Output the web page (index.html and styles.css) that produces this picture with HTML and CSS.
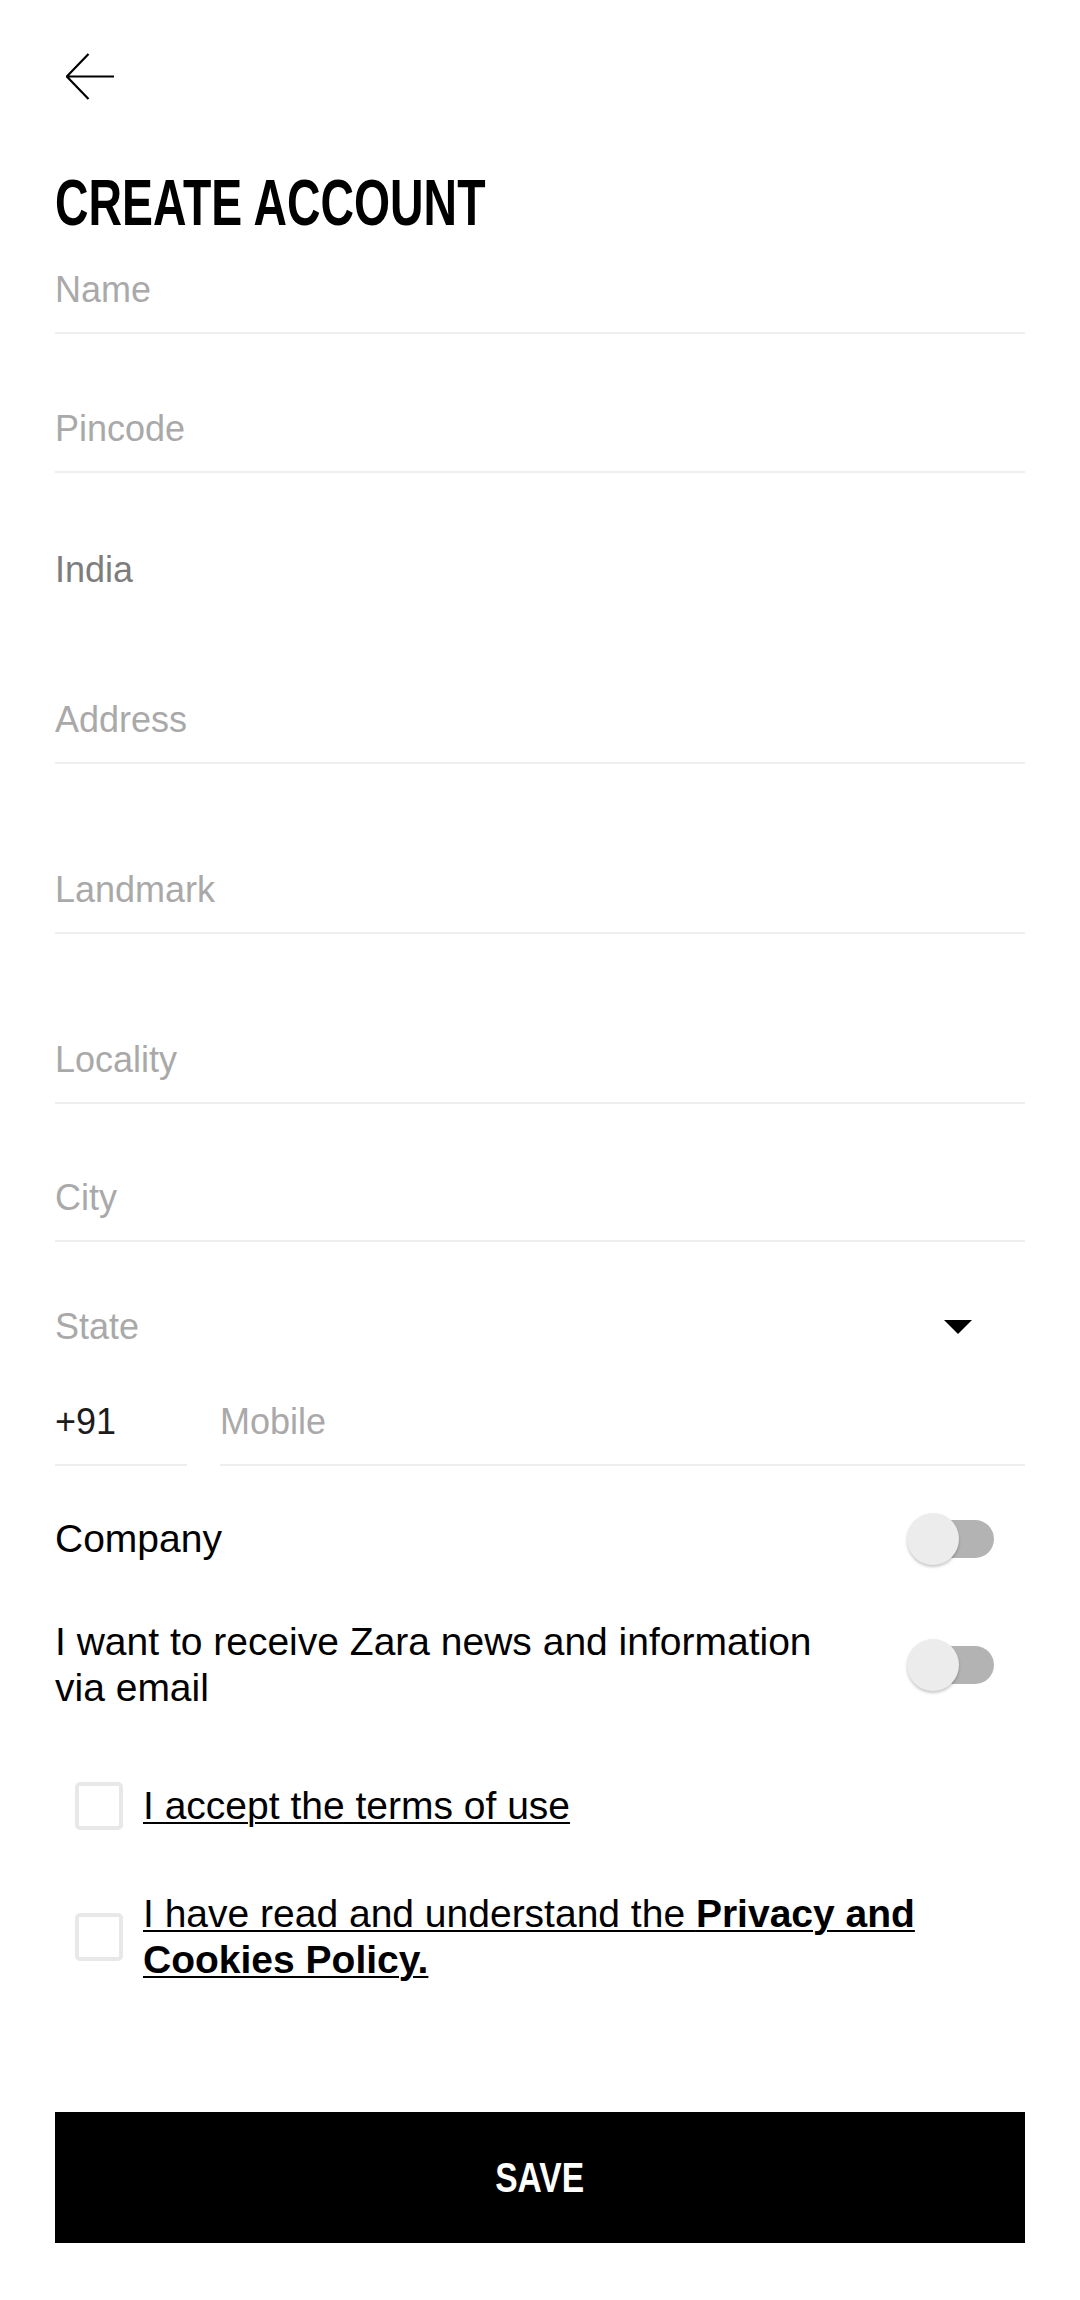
FILE: index.html
```html
<!DOCTYPE html>
<html lang="en">
<head>
<meta charset="utf-8">
<title>Create account</title>
<link rel="stylesheet" href="styles.css">
</head>
<body>
<div class="page">
  <header class="header">
    <svg class="back" width="50" height="48" viewBox="0 0 50 48" aria-label="Back">
      <path d="M48 24.5H1.5M22.5 2L0.8 24.5L22.5 47" fill="none" stroke="#000" stroke-width="2.2"/>
    </svg>
    <h1 class="title">CREATE ACCOUNT</h1>
  </header>

  <form class="form">
    <div class="field f-name"><span class="ph">Name</span></div>
    <div class="field f-pin"><span class="ph">Pincode</span></div>
    <div class="field plain f-country"><span class="value-grey">India</span></div>
    <div class="field f-address"><span class="ph">Address</span></div>
    <div class="field f-landmark"><span class="ph">Landmark</span></div>
    <div class="field f-locality"><span class="ph">Locality</span></div>
    <div class="field f-city"><span class="ph">City</span></div>
    <div class="field plain select f-state">
      <span class="ph">State</span>
      <svg class="caret" width="28" height="14" viewBox="0 0 28 14"><path d="M0 0H28L14 14Z" fill="#000"/></svg>
    </div>
    <div class="phone">
      <div class="field prefix"><span class="value-dark">+91</span></div>
      <div class="field mobile"><span class="ph">Mobile</span></div>
    </div>

    <div class="toggle-row t-company">
      <span class="toggle-label">Company</span>
      <span class="switch"></span>
    </div>
    <div class="toggle-row t-news">
      <span class="toggle-label">I want to receive Zara news and information via email</span>
      <span class="switch"></span>
    </div>

    <div class="check-row c-terms">
      <span class="box"></span>
      <span class="check-label"><span class="link">I accept the terms of use</span></span>
    </div>
    <div class="check-row c-privacy">
      <span class="box"></span>
      <span class="check-label"><span class="link">I have read and understand the <b>Privacy and Cookies Policy.</b></span></span>
    </div>

    <button type="button" class="save"><span class="save-text">SAVE</span></button>
  </form>
</div>
</body>
</html>
```

FILE: styles.css
```css
html, body {
  margin: 0;
  padding: 0;
  background: #fff;
}
body {
  font-family: "Liberation Sans", Arial, sans-serif;
  color: #000;
}
.page {
  width: 1080px;
  padding: 0 55px;
  box-sizing: border-box;
}
.header {
  padding-top: 52px;
}
.back {
  display: block;
  margin-left: 11px;
}
.title {
  margin: 68px 0 0 0;
  font-family: "Liberation Sans", sans-serif;
  font-weight: 700;
  font-size: 64px;
  line-height: 70px;
  transform: scaleX(0.725);
  transform-origin: left center;
  white-space: nowrap;
}
.form {
  display: flex;
  flex-direction: column;
}
.field {
  font-size: 36px;
  line-height: 40px;
  padding-bottom: 22px;
  border-bottom: 2px solid #eeeeee;
  display: flex;
  align-items: center;
}
.field.plain {
  border-bottom: none;
  padding-bottom: 0;
}
.ph { color: #a9a9a9; }
.value-grey { color: #7d7d7d; }
.value-dark { color: #1c1c1c; }

.f-name { margin-top: 32px; }
.f-pin { margin-top: 75px; }
.f-country { margin-top: 77px; }
.f-address { margin-top: 110px; }
.f-landmark { margin-top: 106px; }
.f-locality { margin-top: 106px; }
.f-city { margin-top: 74px; }
.f-state { margin-top: 65px; justify-content: space-between; }
.caret { display: block; margin-right: 53px; }

.phone {
  margin-top: 55px;
  display: flex;
  gap: 33px;
}
.prefix { width: 132px; flex: none; }
.mobile { flex: 1; }

.toggle-row {
  display: flex;
  align-items: center;
  font-size: 39px;
  line-height: 46px;
}
.toggle-label {
  flex: 1;
  padding-right: 80px;
}
.t-company { margin-top: 50px; }
.t-news { margin-top: 57px; }
.switch {
  position: relative;
  flex: none;
  width: 80px;
  height: 38px;
  border-radius: 19px;
  background: #b3b3b3;
  margin-right: 31px;
}
.switch::before {
  content: "";
  position: absolute;
  left: -7px;
  top: -7px;
  width: 52px;
  height: 52px;
  border-radius: 50%;
  background: #ececec;
  box-shadow: 0 2px 3px rgba(0,0,0,0.22);
}

.check-row {
  display: flex;
  align-items: center;
  font-size: 39px;
  line-height: 46px;
}
.c-terms { margin-top: 71px; }
.c-privacy { margin-top: 61px; }
.box {
  flex: none;
  width: 48px;
  height: 48px;
  box-sizing: border-box;
  border: 4px solid #e8e8e8;
  border-radius: 5px;
  margin-left: 20px;
  margin-right: 20px;
}
.check-label {
  flex: 1;
  padding-right: 60px;
}
.link {
  text-decoration: underline;
  text-decoration-thickness: 2px;
  text-underline-offset: 3px;
}
.link b { font-weight: 700; }

.save {
  margin-top: 129px;
  height: 131px;
  width: 100%;
  background: #000;
  border: none;
  display: flex;
  align-items: center;
  justify-content: center;
  padding: 0;
  cursor: pointer;
}
.save-text {
  color: #fff;
  font-family: "Liberation Sans", sans-serif;
  font-weight: 700;
  font-size: 42px;
  line-height: 46px;
  transform: scaleX(0.80);
}
```
